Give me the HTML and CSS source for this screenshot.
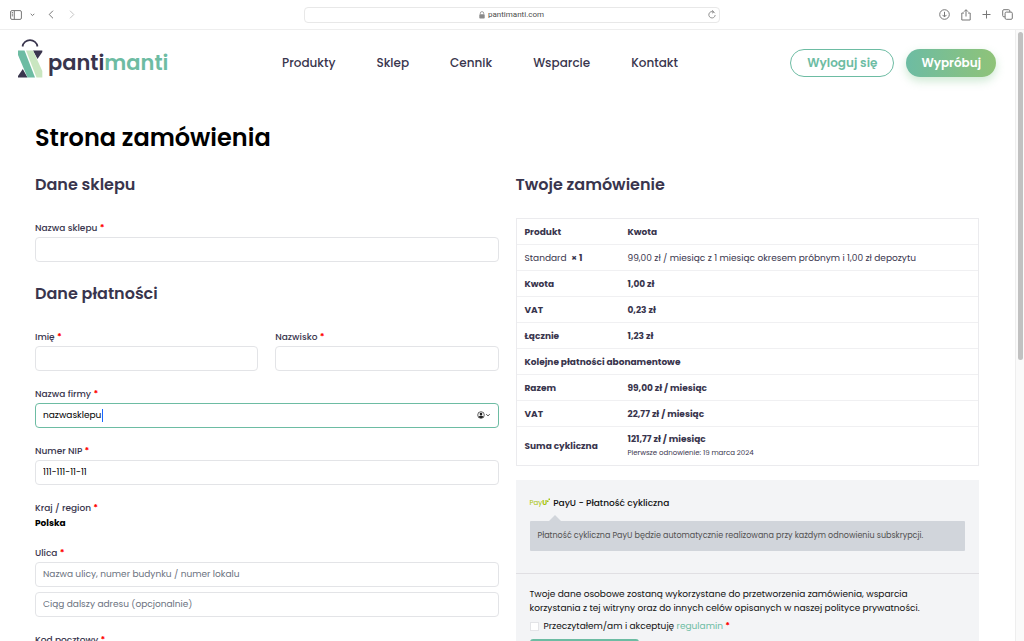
FILE: index.html
```html
<!DOCTYPE html>
<html lang="pl">
<head>
<meta charset="utf-8">
<meta name="viewport" content="width=device-width, initial-scale=1">
<title>Strona zamówienia – pantimanti</title>
<link rel="stylesheet" href="styles.css">
</head>
<body>
<div class="toolbar">
  <div class="tools tools-left">
    <button class="tool" aria-label="Pasek boczny"><svg width="12" height="10" viewBox="0 0 12 10"><rect x=".6" y=".6" width="10.8" height="8.8" rx="1.4"/><path d="M4.3.6v8.8M1.8 2.6h1.3M1.8 4.2h1.3M1.8 5.8h1.3"/></svg></button>
    <button class="tool tool-caret" aria-label="Grupy kart"><svg width="5" height="4" viewBox="0 0 5 4"><path d="M.7.8l1.8 1.8L4.3.8"/></svg></button>
    <button class="tool tool-back" aria-label="Wstecz"><svg width="6" height="9" viewBox="0 0 6 9"><path d="M5 .7L1.2 4.5 5 8.3"/></svg></button>
    <button class="tool tool-next" aria-label="Dalej"><svg width="6" height="9" viewBox="0 0 6 9"><path d="M1 .7l3.8 3.8L1 8.3"/></svg></button>
  </div>
  <div class="address">
    <span class="address-text"><svg width="6" height="8" viewBox="0 0 6 8"><rect x=".3" y="3.2" width="5.4" height="4.4" rx=".8" fill="#8a8a8a"/><path d="M1.3 3.4V2.3a1.7 1.7 0 0 1 3.4 0v1.1" fill="none" stroke="#8a8a8a" stroke-width=".8"/></svg>pantimanti.com</span>
    <button class="tool" aria-label="Odśwież"><svg width="8" height="9" viewBox="0 0 8 9"><path d="M6.8 3.2A3.2 3.2 0 1 0 7.2 5M4 .3l1.7 1.5L4 3.3" stroke-width=".8"/></svg></button>
  </div>
  <div class="tools tools-right">
    <button class="tool" aria-label="Pobrane"><svg width="11" height="11" viewBox="0 0 11 11"><circle cx="5.5" cy="5.5" r="4.8"/><path d="M5.5 2.8v5M3.5 5.9l2 2 2-2"/></svg></button>
    <button class="tool" aria-label="Udostępnij"><svg width="10" height="12" viewBox="0 0 10 12"><path d="M3 4H.8v7h8.4V4H7M5 7.5V.9M3 2.7l2-2 2 2"/></svg></button>
    <button class="tool" aria-label="Nowa karta"><svg width="9" height="9" viewBox="0 0 9 9"><path d="M4.5.5v8M.5 4.5h8"/></svg></button>
    <button class="tool" aria-label="Przegląd kart"><svg width="11" height="11" viewBox="0 0 11 11"><rect x="3.1" y="3.1" width="7.2" height="7.2" rx="1.2"/><path d="M3.1 7.8H1.9A1.2 1.2 0 0 1 .7 6.6V1.9A1.2 1.2 0 0 1 1.9.7h4.7a1.2 1.2 0 0 1 1.2 1.2v1.2"/></svg></button>
  </div>
</div>
<div class="viewport">
  <div class="page">
    <header class="header">
      <a class="logo" href="#" aria-label="pantimanti">
        <svg width="25" height="40" viewBox="0 0 25 40"><path d="M4.5 8.500a7.600 7.600 0 0 1 15 0" fill="none" stroke="#39354d" stroke-width="1.700"/><path d="M15 12.500h9.300v1.500L19.500 21z" fill="#39354d"/><path d="M0 39.500v-1.500L4.800 31l4.700 8.500z" fill="#39354d"/><path d="M0 12.500h6.500L17 39.500H9.500L0 17z" fill="#6dbca3"/><path d="M8 12.500h7L24.300 33v6.500H18.500z" fill="#c9e6c0"/></svg>
        <span class="logo-text">panti<span class="logo-accent">manti</span></span>
      </a>
      <nav class="nav"><a href="#">Produkty</a><a href="#">Sklep</a><a href="#">Cennik</a><a href="#">Wsparcie</a><a href="#">Kontakt</a></nav>
      <div class="actions"><button class="btn btn-outline">Wyloguj się</button><button class="btn btn-fill">Wypróbuj</button></div>
    </header>
    <main class="content">
      <h1 class="title">Strona zamówienia</h1>
      <form class="columns">
        <div class="column">
          <h2 class="heading">Dane sklepu</h2>
          <div class="fields">
            <div class="field"><label for="shop">Nazwa sklepu <b class="req">*</b></label><input class="input" id="shop" type="text"></div>
          </div>
          <h2 class="heading heading-next">Dane płatności</h2>
          <div class="fields">
            <div class="pair">
              <div class="field"><label for="first">Imię <b class="req">*</b></label><input class="input" id="first" type="text"></div>
              <div class="field"><label for="last">Nazwisko <b class="req">*</b></label><input class="input" id="last" type="text"></div>
            </div>
            <div class="field"><label for="company">Nazwa firmy <b class="req">*</b></label>
              <div class="active-box"><input class="input input-active" id="company" type="text" value="nazwasklepu"><span class="cursor"></span>
                <button class="autofill" type="button" aria-label="Autouzupełnianie"><svg width="14" height="8" viewBox="0 0 14 8"><circle cx="4" cy="4" r="3.3" fill="none" stroke="#222" stroke-width=".7"/><circle cx="4" cy="3.1" r="1.3" fill="#222"/><path d="M1.5 6c.8-1.700 4.200-1.700 5 0A3.300 3.300 0 0 1 1.500 6z" fill="#222"/><path d="M9.3 3.2l1.700 1.700 1.700-1.700" fill="none" stroke="#333" stroke-width=".9"/></svg></button></div>
            </div>
            <div class="field"><label for="nip">Numer NIP <b class="req">*</b></label><input class="input" id="nip" type="text" value="111-111-11-11"></div>
            <div class="field"><span>Kraj / region <b class="req">*</b></span><strong class="country">Polska</strong></div>
            <div class="field"><label for="street">Ulica <b class="req">*</b></label><input class="input" id="street" type="text" placeholder="Nazwa ulicy, numer budynku / numer lokalu"><input class="input input-second" type="text" aria-label="Ciąg dalszy adresu" placeholder="Ciąg dalszy adresu (opcjonalnie)"></div>
            <div class="field"><label for="zip">Kod pocztowy <b class="req">*</b></label><input class="input" id="zip" type="text"></div>
          </div>
        </div>
        <div class="column">
          <h2 class="heading">Twoje zamówienie</h2>
          <table class="order">
            <tbody>
            <tr><th>Produkt</th><th>Kwota</th></tr>
            <tr><td>Standard &nbsp;<b>× 1</b></td><td>99,00 zł / miesiąc z 1 miesiąc okresem próbnym i 1,00 zł depozytu</td></tr>
            <tr><th>Kwota</th><th>1,00 zł</th></tr>
            <tr><th>VAT</th><th>0,23 zł</th></tr>
            <tr><th>Łącznie</th><th>1,23 zł</th></tr>
            <tr><th colspan="2">Kolejne płatności abonamentowe</th></tr>
            <tr><th>Razem</th><th>99,00 zł / miesiąc</th></tr>
            <tr><th>VAT</th><th>22,77 zł / miesiąc</th></tr>
            <tr class="sum"><th>Suma cykliczna</th><th>121,77 zł / miesiąc<small class="renewal">Pierwsze odnowienie: 19 marca 2024</small></th></tr>
            </tbody>
          </table>
          <section class="payment">
            <div class="method">
              <div class="method-name"><span class="payu">Pay<b>U</b><svg width="3" height="4" viewBox="0 0 3 4"><path d="M0 2.500h1.500V4H0zM1.500.5H3V2H1.500z" fill="#a6c307"/></svg></span>PayU - Płatność cykliczna</div>
              <p class="note">Płatność cykliczna PayU będzie automatycznie realizowana przy każdym odnowieniu subskrypcji.</p>
            </div>
            <div class="consent">
              <p class="privacy">Twoje dane osobowe zostaną wykorzystane do przetworzenia zamówienia, wsparcia korzystania z tej witryny oraz do innych celów opisanych w naszej polityce prywatności.</p>
              <label class="terms"><input class="check" type="checkbox"><span>Przeczytałem/am i akceptuję <a href="#">regulamin</a> <b class="req">*</b></span></label>
              <button class="submit" type="button" aria-label="Kupuję i płacę"></button>
            </div>
          </section>
        </div>
      </form>
    </main>
  </div>
  <div class="scrollbar"><div class="thumb"></div></div>
</div>
</body>
</html>
```
FILE: styles.css
```css
* { box-sizing: border-box; }
body {
  margin: 0;
  height: 100vh;
  display: flex;
  flex-direction: column;
  overflow: hidden;
  background: #fff;
  color: #39354d;
  font: 400 9px/16px Poppins, Inter, sans-serif;
}
button, input { font: inherit; }
h1, h2, p { margin: 0; }
a { color: inherit; text-decoration: none; }
svg { display: block; flex: none; }

/* Browser toolbar */
.toolbar {
  flex: none;
  height: 30px;
  display: grid;
  grid-template-columns: 1fr 416px 1fr;
  align-items: center;
  padding: 0 11px 0 10px;
  border-bottom: 1px solid #eee;
}
.tools { display: flex; align-items: center; }
.tools-right { justify-content: flex-end; gap: 11px; }
.tool { padding: 0; border: 0; background: none; }
.tool svg { fill: none; stroke: #777; stroke-width: 1; }
.tool-caret { margin-left: 8px; }
.tool-back { margin-left: 13px; }
.tool-next { margin-left: 15px; }
.tool-next svg { stroke: #c4c4c4; }
.address {
  height: 16px;
  display: flex;
  align-items: center;
  padding: 0 3px;
  border: 1px solid #e8e8e8;
  border-radius: 4px;
}
.address-text {
  flex: 1;
  display: flex;
  align-items: center;
  justify-content: center;
  gap: 3px;
  padding-left: 8px;
  color: #4c4c4c;
  font: 8px/14px Roboto, sans-serif;
}

/* Page frame */
.viewport { flex: 1; min-height: 0; display: flex; }
.page { flex: 1; min-width: 0; overflow: hidden; }
.scrollbar {
  flex: none;
  width: 9px;
  padding: 2px;
  background: #fafafa;
  border-left: 1px solid #eee;
}
.thumb { width: 5px; height: 54%; border-radius: 3px; background: #c1c1c1; }

/* Header */
.header {
  display: flex;
  align-items: center;
  height: 66px;
  padding: 0 19px 0 18px;
}
.logo { flex: none; width: 264px; display: flex; align-items: center; gap: 5px; padding-bottom: 10px; }
.logo-text { font-size: 21px; font-weight: 600; line-height: 28px; padding-top: 10px; }
.logo-accent { color: #6dbca3; }
.nav { display: flex; gap: 41px; font-size: 12px; font-weight: 500; }
.actions { flex: 1; display: flex; justify-content: flex-end; gap: 12px; }
.btn {
  height: 28px;
  padding: 0 16px;
  border: 1px solid #6dbca3;
  border-radius: 14px;
  background: #fff;
  color: #6dbca3;
  font-size: 12px;
  font-weight: 600;
  white-space: nowrap;
}
.btn-fill {
  border: 0;
  padding: 0 15px;
  background: linear-gradient(90deg, #6dbca3, #8fc378);
  color: #fff;
  box-shadow: 0 4px 10px #6dbc7a55;
}

/* Order form */
.content { padding: 24px 36px 0 35px; }
.title { color: #000; font-size: 24px; font-weight: 600; line-height: 36px; }
.columns { display: grid; grid-template-columns: 1fr 1fr; gap: 17px; margin-top: 17px; }
.column { min-width: 0; }
.heading { font-size: 16px; font-weight: 600; line-height: 24px; }
.heading-next { margin-top: 20px; }
.fields { display: flex; flex-direction: column; gap: 15px; margin-top: 23px; }
.pair { display: grid; grid-template-columns: 1fr 1fr; gap: 17px; }
.field { display: flex; flex-direction: column; font-weight: 500; }
.field label { margin-bottom: 1px; }
.req { color: #f00; }
.input {
  width: 100%;
  height: 25px;
  padding: 0 7px;
  border: 1px solid #e3e4e7;
  border-radius: 4px;
  background: #fff;
  color: #000;
  font-weight: 400;
  outline: none;
}
.input::placeholder { color: #6b7280; opacity: 1; }
.input-second { margin-top: 5px; }
.input-active { border-color: #6dbca3; }
.active-box { position: relative; }
.cursor { position: absolute; left: 67px; top: 6px; width: 1px; height: 13px; background: #1a66ff; }
.autofill { position: absolute; right: 8px; top: 8px; padding: 0; border: 0; background: none; }
.country { color: #000; font-weight: 700; line-height: 14px; }

/* Order summary */
.order {
  width: 100%;
  margin-top: 21px;
  border: 1px solid #ebebee;
  border-spacing: 0;
  text-align: left;
}
.order th, .order td { height: 26px; padding: 0 8px; border-bottom: 1px solid #f0f0f2; }
.order th { font-weight: 700; }
.order th:first-child, .order td:first-child { width: 103px; }
.order .sum th { height: 38px; border-bottom: 0; line-height: 14px; white-space: nowrap; }
.renewal { display: block; font-size: 7px; font-weight: 400; }

/* Payment */
.payment { margin-top: 14px; background: #f3f4f6; color: #111; }
.method { padding: 15px 14px 22px; border-bottom: 1px solid #e0dfe3; }
.method-name { display: flex; align-items: center; gap: 3px; font-weight: 500; }
.payu { display: flex; align-items: center; color: #a6c307; font-size: 7px; font-weight: 400; }
.payu svg { align-self: flex-start; margin-top: 3px; }
.note {
  position: relative;
  margin-top: 10px;
  padding: 7px 8px;
  border-radius: 1px;
  background: #d1d5db;
  color: #515151;
  font-size: 8px;
}
.note::before {
  content: "";
  position: absolute;
  left: 19px;
  top: -6px;
  border: 6px solid transparent;
  border-top: 0;
  border-bottom-color: #d1d5db;
}
.consent { padding: 13px 14px; }
.privacy { padding-right: 24px; line-height: 14px; }
.terms { display: flex; align-items: center; gap: 5px; margin-top: 3px; }
.terms a { color: #6dbca3; }
.check { appearance: none; width: 9px; height: 9px; margin: 0; border: 1px solid #e3e4e7; background: #fff; }
.submit {
  width: 109px;
  height: 26px;
  margin-top: 5px;
  border: 0;
  border-radius: 3px;
  background: #6dbca3;
}
```
